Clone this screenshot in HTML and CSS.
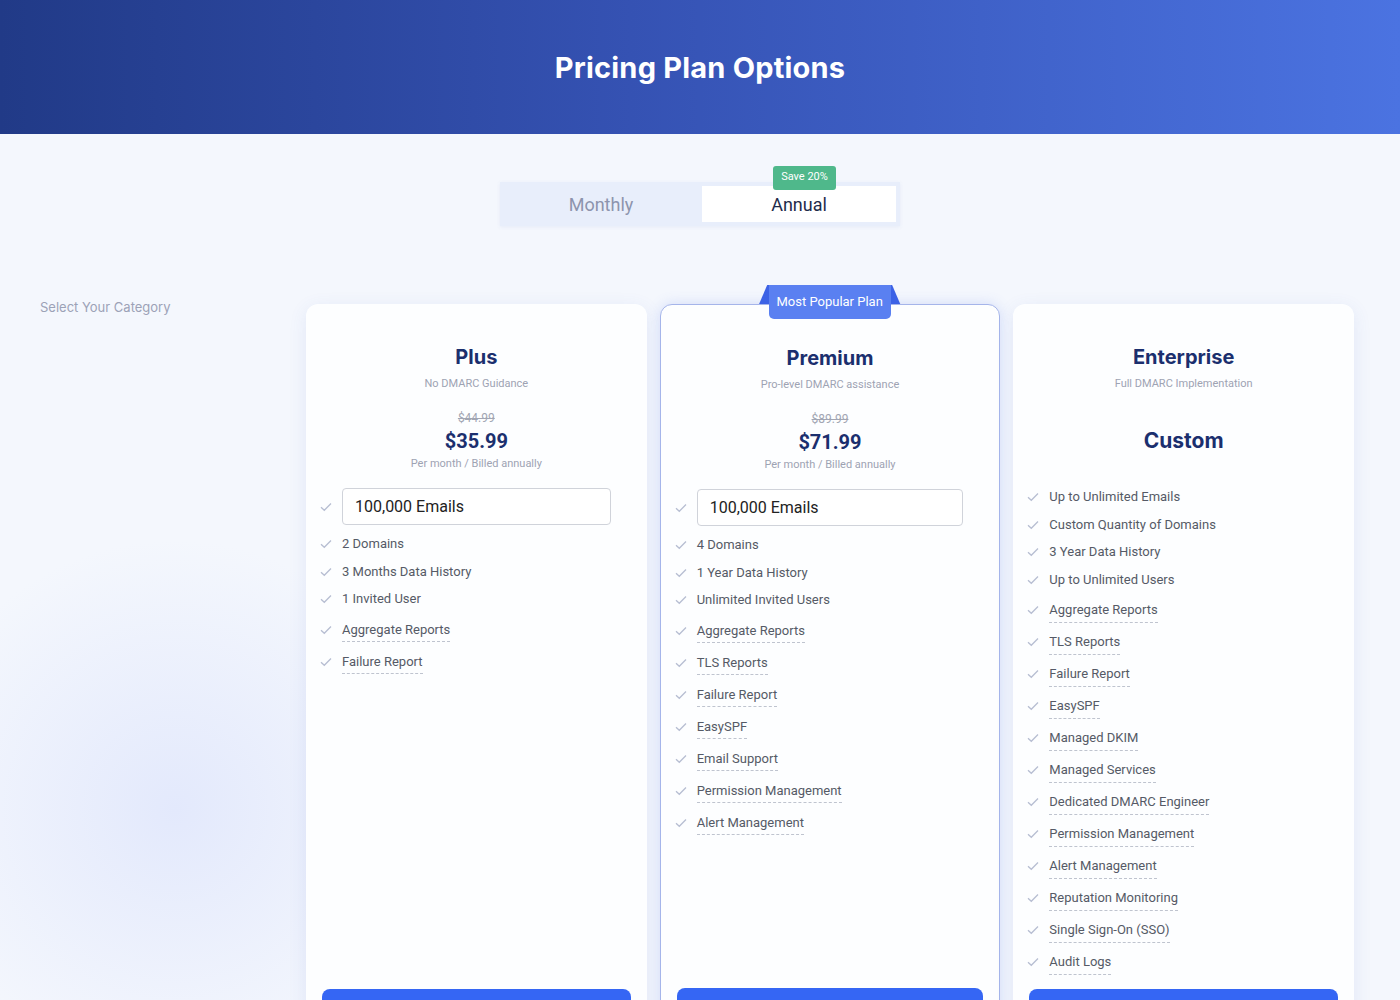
FILE: index.html
```
<!DOCTYPE html>
<html lang="en">
<head>
    <meta charset="UTF-8">
    <meta name="viewport" content="width=device-width, initial-scale=1.0">
    <title>Pricing Plan Options</title>
    <link rel="stylesheet" href="styles.css">
</head>
<body>

    <header class="hero">
        <h1>Pricing Plan Options</h1>
    </header>

    <div class="billing">
        <div class="toggle">
            <button class="toggle-btn">Monthly</button>
            <button class="toggle-btn active">Annual<span class="save">Save 20%</span></button>
        </div>
    </div>

    <main class="layout">
        <aside class="sidebar">
            <p class="sidebar-title">Select Your Category</p>
        </aside>

        <div class="plans">
            <!-- Plus -->
            <div class="plan">
                <div class="plan-head">
                    <h2 class="plan-name">Plus</h2>
                    <p class="plan-desc">No DMARC Guidance</p>
                    <p class="old-price">$44.99</p>
                    <p class="price">$35.99</p>
                    <p class="billed">Per month / Billed annually</p>
                </div>
                <ul class="features">
                    <li class="feature-input"><svg class="check" viewBox="0 0 12 10"><path d="M1 5.2l3.3 3.1L11 1.5"/></svg><div class="emails">100,000 Emails</div></li>
                    <li><svg class="check" viewBox="0 0 12 10"><path d="M1 5.2l3.3 3.1L11 1.5"/></svg><span>2 Domains</span></li>
                    <li><svg class="check" viewBox="0 0 12 10"><path d="M1 5.2l3.3 3.1L11 1.5"/></svg><span>3 Months Data History</span></li>
                    <li><svg class="check" viewBox="0 0 12 10"><path d="M1 5.2l3.3 3.1L11 1.5"/></svg><span>1 Invited User</span></li>
                    <li class="has-tip"><svg class="check" viewBox="0 0 12 10"><path d="M1 5.2l3.3 3.1L11 1.5"/></svg><span class="tip">Aggregate Reports</span></li>
                    <li class="has-tip"><svg class="check" viewBox="0 0 12 10"><path d="M1 5.2l3.3 3.1L11 1.5"/></svg><span class="tip">Failure Report</span></li>
                </ul>
                <button class="plan-btn" aria-label="Choose Plus"></button>
            </div>

            <!-- Premium -->
            <div class="plan popular">
                <span class="ribbon">Most Popular Plan</span>
                <div class="plan-head">
                    <h2 class="plan-name">Premium</h2>
                    <p class="plan-desc">Pro-level DMARC assistance</p>
                    <p class="old-price">$89.99</p>
                    <p class="price">$71.99</p>
                    <p class="billed">Per month / Billed annually</p>
                </div>
                <ul class="features">
                    <li class="feature-input"><svg class="check" viewBox="0 0 12 10"><path d="M1 5.2l3.3 3.1L11 1.5"/></svg><div class="emails">100,000 Emails</div></li>
                    <li><svg class="check" viewBox="0 0 12 10"><path d="M1 5.2l3.3 3.1L11 1.5"/></svg><span>4 Domains</span></li>
                    <li><svg class="check" viewBox="0 0 12 10"><path d="M1 5.2l3.3 3.1L11 1.5"/></svg><span>1 Year Data History</span></li>
                    <li><svg class="check" viewBox="0 0 12 10"><path d="M1 5.2l3.3 3.1L11 1.5"/></svg><span>Unlimited Invited Users</span></li>
                    <li class="has-tip"><svg class="check" viewBox="0 0 12 10"><path d="M1 5.2l3.3 3.1L11 1.5"/></svg><span class="tip">Aggregate Reports</span></li>
                    <li class="has-tip"><svg class="check" viewBox="0 0 12 10"><path d="M1 5.2l3.3 3.1L11 1.5"/></svg><span class="tip">TLS Reports</span></li>
                    <li class="has-tip"><svg class="check" viewBox="0 0 12 10"><path d="M1 5.2l3.3 3.1L11 1.5"/></svg><span class="tip">Failure Report</span></li>
                    <li class="has-tip"><svg class="check" viewBox="0 0 12 10"><path d="M1 5.2l3.3 3.1L11 1.5"/></svg><span class="tip">EasySPF</span></li>
                    <li class="has-tip"><svg class="check" viewBox="0 0 12 10"><path d="M1 5.2l3.3 3.1L11 1.5"/></svg><span class="tip">Email Support</span></li>
                    <li class="has-tip"><svg class="check" viewBox="0 0 12 10"><path d="M1 5.2l3.3 3.1L11 1.5"/></svg><span class="tip">Permission Management</span></li>
                    <li class="has-tip"><svg class="check" viewBox="0 0 12 10"><path d="M1 5.2l3.3 3.1L11 1.5"/></svg><span class="tip">Alert Management</span></li>
                </ul>
                <button class="plan-btn" aria-label="Choose Premium"></button>
            </div>

            <!-- Enterprise -->
            <div class="plan">
                <div class="plan-head">
                    <h2 class="plan-name">Enterprise</h2>
                    <p class="plan-desc">Full DMARC Implementation</p>
                    <p class="old-price blank">&nbsp;</p>
                    <p class="price custom">Custom</p>
                    <p class="billed">&nbsp;</p>
                </div>
                <ul class="features">
                    <li><svg class="check" viewBox="0 0 12 10"><path d="M1 5.2l3.3 3.1L11 1.5"/></svg><span>Up to Unlimited Emails</span></li>
                    <li><svg class="check" viewBox="0 0 12 10"><path d="M1 5.2l3.3 3.1L11 1.5"/></svg><span>Custom Quantity of Domains</span></li>
                    <li><svg class="check" viewBox="0 0 12 10"><path d="M1 5.2l3.3 3.1L11 1.5"/></svg><span>3 Year Data History</span></li>
                    <li><svg class="check" viewBox="0 0 12 10"><path d="M1 5.2l3.3 3.1L11 1.5"/></svg><span>Up to Unlimited Users</span></li>
                    <li class="has-tip"><svg class="check" viewBox="0 0 12 10"><path d="M1 5.2l3.3 3.1L11 1.5"/></svg><span class="tip">Aggregate Reports</span></li>
                    <li class="has-tip"><svg class="check" viewBox="0 0 12 10"><path d="M1 5.2l3.3 3.1L11 1.5"/></svg><span class="tip">TLS Reports</span></li>
                    <li class="has-tip"><svg class="check" viewBox="0 0 12 10"><path d="M1 5.2l3.3 3.1L11 1.5"/></svg><span class="tip">Failure Report</span></li>
                    <li class="has-tip"><svg class="check" viewBox="0 0 12 10"><path d="M1 5.2l3.3 3.1L11 1.5"/></svg><span class="tip">EasySPF</span></li>
                    <li class="has-tip"><svg class="check" viewBox="0 0 12 10"><path d="M1 5.2l3.3 3.1L11 1.5"/></svg><span class="tip">Managed DKIM</span></li>
                    <li class="has-tip"><svg class="check" viewBox="0 0 12 10"><path d="M1 5.2l3.3 3.1L11 1.5"/></svg><span class="tip">Managed Services</span></li>
                    <li class="has-tip"><svg class="check" viewBox="0 0 12 10"><path d="M1 5.2l3.3 3.1L11 1.5"/></svg><span class="tip">Dedicated DMARC Engineer</span></li>
                    <li class="has-tip"><svg class="check" viewBox="0 0 12 10"><path d="M1 5.2l3.3 3.1L11 1.5"/></svg><span class="tip">Permission Management</span></li>
                    <li class="has-tip"><svg class="check" viewBox="0 0 12 10"><path d="M1 5.2l3.3 3.1L11 1.5"/></svg><span class="tip">Alert Management</span></li>
                    <li class="has-tip"><svg class="check" viewBox="0 0 12 10"><path d="M1 5.2l3.3 3.1L11 1.5"/></svg><span class="tip">Reputation Monitoring</span></li>
                    <li class="has-tip"><svg class="check" viewBox="0 0 12 10"><path d="M1 5.2l3.3 3.1L11 1.5"/></svg><span class="tip">Single Sign-On (SSO)</span></li>
                    <li class="has-tip"><svg class="check" viewBox="0 0 12 10"><path d="M1 5.2l3.3 3.1L11 1.5"/></svg><span class="tip">Audit Logs</span></li>
                </ul>
                <button class="plan-btn" aria-label="Contact sales"></button>
            </div>
        </div>
    </main>

</body>
</html>
```

FILE: styles.css
```
body {
    margin: 0;
    font-family: Roboto, "Liberation Sans", Arial, sans-serif;
    color: #555a66;
    background:
        radial-gradient(circle at 175px 810px, #e3e9fc 0, rgba(227, 233, 252, 0) 270px),
        #f4f7fd;
}
.hero {
    height: 134px;
    display: flex;
    align-items: center;
    justify-content: center;
    background: linear-gradient(90deg, #213a87 0%, #3552b3 45%, #4b73e1 100%);
}
.hero h1 {
    margin: 0;
    color: #fff;
    font-family: Inter, "Noto Sans", sans-serif;
    font-size: 29px;
    font-weight: 700;
    letter-spacing: 0.2px;
}

/* billing toggle */
.billing {
    display: flex;
    justify-content: center;
    margin-top: 48px;
}
.toggle {
    display: flex;
    gap: 4px;
    width: 400px;
    padding: 4px;
    box-sizing: border-box;
    background-color: #e8eefb;
    box-shadow: 0 1px 4px rgba(60, 90, 180, 0.08);
}
.toggle-btn {
    position: relative;
    flex: 1;
    height: 36px;
    border: none;
    background: none;
    font-family: Roboto, sans-serif;
    font-size: 18px;
    color: #8d94ad;
    cursor: pointer;
}
.toggle-btn.active {
    background-color: #fff;
    color: #1e2a4a;
}
.save {
    position: absolute;
    top: -20px;
    left: 71px;
    width: 63px;
    height: 24px;
    line-height: 22px;
    border-radius: 3px;
    background-color: #4fb88b;
    color: #fff;
    font-size: 11px;
}

/* main layout */
.layout {
    display: grid;
    grid-template-columns: 266px 1fr;
    margin-top: 64px;
    padding: 0 46px 0 40px;
}
.sidebar-title {
    margin: 7px 0 0;
    line-height: 20px;
    font-family: Inter, "Noto Sans", sans-serif;
    font-size: 13px;
    color: #9ca2b7;
}
.plans {
    display: grid;
    grid-template-columns: repeat(3, 1fr);
    gap: 13px;
    padding-top: 14px;
}
.plan {
    position: relative;
    display: flex;
    flex-direction: column;
    padding: 0 16px 16px;
    background-color: #fdfeff;
    border-radius: 12px;
    box-shadow: 0 4px 18px rgba(70, 100, 200, 0.1);
}
.plan.popular {
    border: 1px solid #a5b5ea;
    box-shadow: 0 0 14px rgba(80, 115, 230, 0.2);
}
.ribbon {
    position: absolute;
    top: -20px;
    left: 108px;
    width: 122px;
    height: 34px;
    line-height: 33px;
    text-align: center;
    background-color: #5a80f1;
    color: #fff;
    font-size: 13px;
    border-radius: 0 0 5px 5px;
}
.ribbon::before {
    content: "";
    position: absolute;
    z-index: -1;
    top: 0;
    left: -10px;
    width: 142px;
    height: 20px;
    background-color: #3c62e6;
    clip-path: polygon(6% 0, 94% 0, 100% 100%, 0 100%);
}

.plan-head {
    padding-top: 39px;
    text-align: center;
}
.plan-name {
    margin: 0;
    line-height: 28px;
    font-family: Inter, "Noto Sans", sans-serif;
    font-size: 20px;
    font-weight: 700;
    color: #1b2f6e;
}
.plan-desc {
    margin: 5px 0 0;
    line-height: 16px;
    font-size: 11px;
    color: #9ea3b3;
}
.old-price {
    margin: 18px 0 0;
    line-height: 16px;
    font-size: 12px;
    color: #a2a6b3;
    text-decoration: line-through;
}
.old-price.blank {
    visibility: hidden;
}
.price {
    margin: 2px 0 0;
    line-height: 26px;
    font-size: 20px;
    font-weight: 700;
    color: #1b2f6e;
}
.price.custom {
    font-family: Inter, "Noto Sans", sans-serif;
    font-size: 21px;
}
.billed {
    margin: 2px 0 0;
    line-height: 16px;
    font-size: 11px;
    color: #9ea3b3;
}

.features {
    list-style: none;
    margin: 11px 20px 12px -2px;
    padding: 0;
}
.features li {
    display: flex;
    align-items: flex-start;
    gap: 10px;
    padding: 5px 0;
    line-height: 17.5px;
    font-size: 13px;
}
.features li.has-tip {
    padding: 8px 0 2.5px;
}
.features li.feature-input {
    align-items: center;
}
.check {
    flex: none;
    width: 12px;
    height: 10px;
    margin-top: 4px;
    fill: none;
    stroke: #b7bed2;
    stroke-width: 1.3;
}
.feature-input .check {
    margin-top: 0;
}
.tip {
    padding-bottom: 3px;
    border-bottom: 1px dashed #bfc4cf;
}
.emails {
    flex: 1;
    height: 37px;
    line-height: 35px;
    padding-left: 12px;
    box-sizing: border-box;
    border: 1px solid #d0d3da;
    border-radius: 4px;
    background-color: #fff;
    font-size: 16px;
    color: #222;
}
.plan-btn {
    margin-top: auto;
    height: 46px;
    border: none;
    border-radius: 8px;
    background-color: #3566f4;
}
```
